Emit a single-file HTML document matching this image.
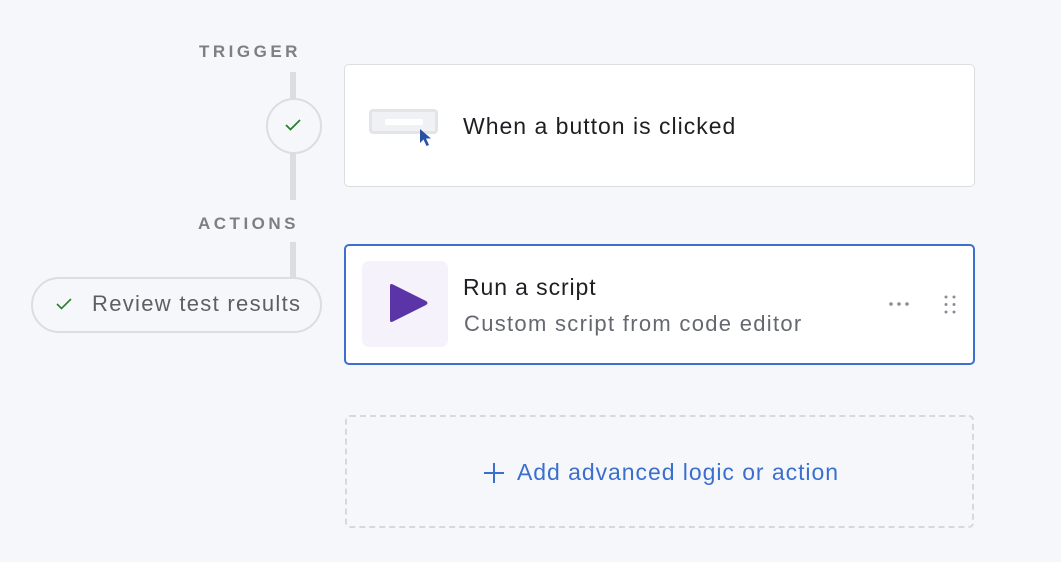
<!DOCTYPE html>
<html><head><style>
body{margin:0;width:1061px;height:562px;background:#f6f7fb;font-family:"Liberation Sans",sans-serif;position:relative;overflow:hidden}
.a{position:absolute;white-space:nowrap}
.lbl{font-size:17px;font-weight:bold;letter-spacing:3.5px;color:#7b7f86}
.card{background:#fff;border:1px solid #dcdde1;border-radius:5px;box-sizing:border-box}
</style></head><body>
<div class="a lbl" style="left:199px;top:42px">TRIGGER</div>
<div class="a lbl" style="left:198px;top:214px">ACTIONS</div>
<div class="a" style="left:290px;top:72px;width:6px;height:128px;background:#dcdde1"></div>
<div class="a" style="left:290px;top:242px;width:6px;height:36px;background:#dcdde1"></div>
<div class="a" style="left:266px;top:98px;width:52px;height:52px;border:2px solid #dcdde1;border-radius:50%;background:#f6f7fb"></div>
<svg class="a" style="left:284px;top:118px" width="18" height="14"><path d="M2 7l4.5 4.5L16 2" fill="none" stroke="#2e7d32" stroke-width="1.8"/></svg>
<div class="a" style="left:31px;top:277px;width:287px;height:52px;border:2.5px solid #dcdde1;border-radius:28px;background:#f6f7fb"></div>
<svg class="a" style="left:55px;top:297px" width="18" height="14"><path d="M2 7l4.5 4.5L16 2" fill="none" stroke="#2e7d32" stroke-width="1.6"/></svg>
<div class="a" style="left:92px;top:291px;font-size:22px;letter-spacing:1.3px;color:#5c5f66">Review test results</div>
<div class="a card" style="left:344px;top:64px;width:631px;height:123px"></div>
<div class="a" style="left:369px;top:109px;width:69px;height:25px;border:3px solid #e3e4e8;border-radius:4px;background:#f0f1f4;box-sizing:border-box"></div>
<div class="a" style="left:385px;top:119px;width:38px;height:6px;background:#fff;border-radius:2px"></div>
<svg class="a" style="left:419px;top:128px" width="14" height="22"><path d="M1 1L1 15L4.5 11.5L7.5 18L10 17L7 10.5L12 10.5Z" fill="#2651a6"/></svg>
<div class="a" style="left:463px;top:113px;font-size:23px;letter-spacing:1px;color:#1d1f23">When a button is clicked</div>
<div class="a card" style="left:344px;top:244px;width:631px;height:121px;border:2.5px solid #3d6fd1"></div>
<div class="a" style="left:362px;top:261px;width:86px;height:86px;background:#f6f2fb;border-radius:7px"></div>
<svg class="a" style="left:388px;top:283px" width="44" height="42"><path d="M2 3Q2 0 5 1.5L38 18Q41 20 38 22L5 38.5Q2 40 2 37Z" fill="#5b34a8"/></svg>
<div class="a" style="left:463px;top:274px;font-size:23px;letter-spacing:0.9px;color:#1d1f23">Run a script</div>
<div class="a" style="left:464px;top:311px;font-size:22px;letter-spacing:1.3px;color:#65686e">Custom script from code editor</div>
<svg class="a" style="left:888px;top:300px" width="22" height="8"><g fill="#8a8d93"><circle cx="3" cy="4" r="1.8"/><circle cx="11" cy="4" r="1.8"/><circle cx="19" cy="4" r="1.8"/></g></svg>
<svg class="a" style="left:942px;top:293px" width="16" height="22"><g fill="#8a8d93"><circle cx="4" cy="4" r="1.5"/><circle cx="12" cy="4" r="1.5"/><circle cx="4" cy="11.5" r="1.5"/><circle cx="12" cy="11.5" r="1.5"/><circle cx="4" cy="19" r="1.5"/><circle cx="12" cy="19" r="1.5"/></g></svg>
<div class="a" style="left:345px;top:415px;width:629px;height:113px;border:2px dashed #d6d8dd;border-radius:5px;box-sizing:border-box"></div>
<svg class="a" style="left:483px;top:462px" width="22" height="22"><path d="M11 1V21M1 11H21" stroke="#3a6fce" stroke-width="2"/></svg>
<div class="a" style="left:517px;top:459px;font-size:23px;letter-spacing:0.95px;color:#3a6fce">Add advanced logic or action</div>
</body></html>
